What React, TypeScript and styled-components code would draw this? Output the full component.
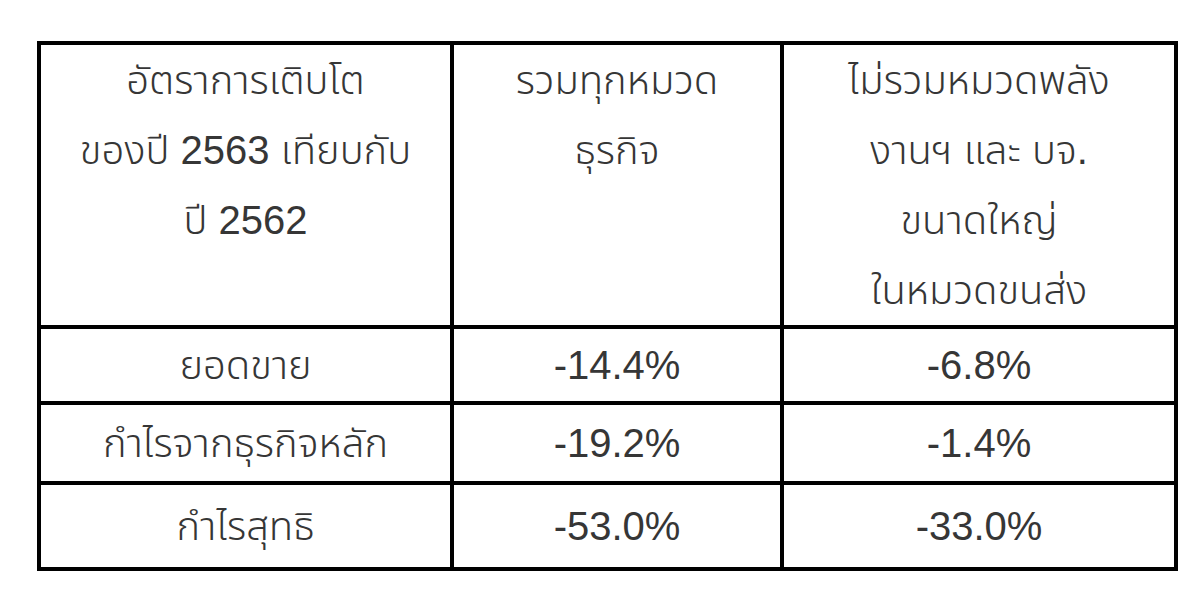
import React from "react";
import styled, { createGlobalStyle } from "styled-components";

const GlobalStyle = createGlobalStyle`
  html, body {
    margin: 0;
    padding: 0;
    background: #ffffff;
  }
`;

const Page = styled.div`
  width: 1200px;
  height: 598px;
  padding: 41px 0 0 37px;
  box-sizing: border-box;
  background: #ffffff;
  font-family: "Liberation Sans", "Noto Sans Thai", "Noto Sans Thai Looped", "DejaVu Sans", sans-serif;
  font-weight: 300;
  color: #363636;
`;

const Table = styled.table`
  width: 1137px;
  border-collapse: collapse;
  table-layout: fixed;
  border: 4px solid #000000;
`;

const Row = styled.tr<{ $height: number }>`
  height: ${({ $height }) => $height}px;
`;

const HeadCell = styled.th`
  border: 4px solid #000000;
  padding: 0;
  vertical-align: top;
  text-align: center;
  font-weight: inherit;
  font-size: 40px;
  line-height: 70px;
  white-space: nowrap;
`;

const Cell = styled.td`
  border: 4px solid #000000;
  padding: 0;
  vertical-align: middle;
  text-align: center;
  font-size: 40px;
  line-height: 48px;
  white-space: nowrap;
`;

const rows = [
  { label: "ยอดขาย", all: "-14.4%", excl: "-6.8%", height: 76 },
  { label: "กำไรจากธุรกิจหลัก", all: "-19.2%", excl: "-1.4%", height: 80 },
  { label: "กำไรสุทธิ", all: "-53.0%", excl: "-33.0%", height: 86 },
];

export default function App() {
  return (
    <>
      <GlobalStyle />
      <Page>
        <Table>
          <colgroup>
            <col style={{ width: 413 }} />
            <col style={{ width: 330 }} />
            <col style={{ width: 394 }} />
          </colgroup>
          <thead>
            <Row $height={282}>
              <HeadCell>
                อัตราการเติบโต
                <br />
                ของปี 2563 เทียบกับ
                <br />
                ปี 2562
              </HeadCell>
              <HeadCell>
                รวมทุกหมวด
                <br />
                ธุรกิจ
              </HeadCell>
              <HeadCell>
                ไม่รวมหมวดพลัง
                <br />
                งานฯ และ บจ.
                <br />
                ขนาดใหญ่
                <br />
                ในหมวดขนส่ง
              </HeadCell>
            </Row>
          </thead>
          <tbody>
            {rows.map((r) => (
              <Row key={r.label} $height={r.height}>
                <Cell>{r.label}</Cell>
                <Cell>{r.all}</Cell>
                <Cell>{r.excl}</Cell>
              </Row>
            ))}
          </tbody>
        </Table>
      </Page>
    </>
  );
}
